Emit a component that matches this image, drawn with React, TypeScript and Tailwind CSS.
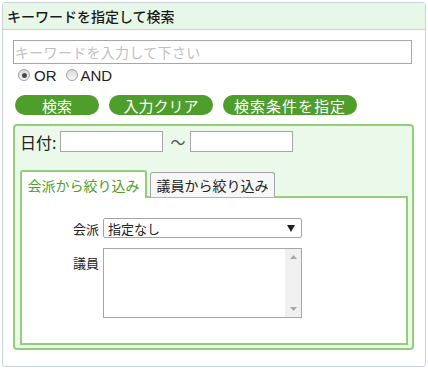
import React from "react";

const jp = { fontFamily: '"Noto Sans CJK JP", "Noto Sans", sans-serif' };

function Radio({ checked }: { checked: boolean }) {
  return (
    <span className="relative inline-block w-[12px] h-[12px] rounded-full border border-[#a0a0a0] bg-gradient-to-b from-[#d9d9d9] to-[#f8f8f8]">
      {checked && <span className="absolute left-[2.5px] top-[2.5px] w-[5px] h-[5px] rounded-full bg-[#4a4a4a]" />}
    </span>
  );
}

export default function App() {
  return (
    <div className="w-[428px] h-[370px] bg-white pt-[2px] pl-[2px]" style={jp}>
      <div className="w-[424px] h-[365px] border border-[#c8d2da] rounded-[3px] flex flex-col">
        <div className="h-[27px] bg-[#e8f8e8] border-b border-[#c8d2da] pl-[4px] flex items-center text-[14px] font-medium text-[#1a1a1a] leading-none">
          キーワードを指定して検索
        </div>
        <div className="pl-[10px] pt-[10px] flex flex-col">
          <div className="w-[399px] h-[24px] border border-[#a6a6a6] flex items-center pl-[1px] text-[14px] tracking-[0.3px] text-[#c0c0c0] leading-none">
            キーワードを入力して下さい
          </div>
          <div className="flex items-center h-[18px] mt-[2px] pl-[5px] text-[15px] text-[#222] leading-none" style={{ fontFamily: '"Liberation Sans", Arial, sans-serif' }}>
            <Radio checked />
            <span className="ml-[4px]">OR</span>
            <span className="ml-[9px]"><Radio checked={false} /></span>
            <span className="ml-[3px]">AND</span>
          </div>
          <div className="flex mt-[11px] pl-[2px] gap-[10px] text-white text-[15px] leading-none">
            <div className="w-[84px] h-[20px] rounded-full bg-[#4f9d2b] flex items-center justify-center">検索</div>
            <div className="w-[104px] h-[20px] rounded-full bg-[#4f9d2b] flex items-center justify-center">入力クリア</div>
            <div className="w-[134px] h-[20px] rounded-full bg-[#4f9d2b] flex items-center justify-center tracking-[1px]">検索条件を指定</div>
          </div>
          <div className="mt-[9px] w-[401px] h-[226px] border-2 border-[#93cf78] rounded-[4px] bg-[#ebf9eb] flex flex-col pl-[5px] pt-[5px]">
            <div className="flex items-center h-[21px] text-[16px] text-[#222] leading-none">
              <span>日付:</span>
              <div className="ml-[4px] w-[103px] h-[21px] bg-white border border-[#a6a6a6]" />
              <span className="ml-[7px] mr-[5px] text-[15px] text-[#555]">〜</span>
              <div className="w-[103px] h-[21px] bg-white border border-[#a6a6a6]" />
            </div>
            <div className="mt-[18px] flex items-end h-[28px] relative z-10 text-[14px] leading-none">
              <div className="w-[127px] h-[28px] border-2 border-b-0 border-[#93cf78] rounded-t-[3px] bg-white text-[#4f9d2b] flex items-center justify-center pb-[1px]">
                会派から絞り込み
              </div>
              <div className="ml-[3px] mb-[1px] w-[125px] h-[25px] border border-b-0 border-[#a6a6a6] rounded-t-[3px] bg-[#f7f7f7] text-[#222] flex items-center justify-center">
                議員から絞り込み
              </div>
            </div>
            <div className="-mt-[2px] w-[388px] h-[149px] border-2 border-[#93cf78] bg-white flex flex-col pt-[20px] text-[#222] leading-none">
              <div className="flex items-center h-[20px]">
                <span className="w-[81px] text-right pr-[4px] text-[13px]">会派</span>
                <div className="w-[199px] h-[20px] border border-[#a6a6a6] rounded-[2px] flex items-center justify-between pl-[4px] pr-[6px] text-[13px]">
                  <span>指定なし</span>
                  <svg width="8" height="7" viewBox="0 0 8 7"><path d="M0 0H8L4 7Z" fill="#222" /></svg>
                </div>
              </div>
              <div className="flex items-start mt-[10px]">
                <span className="w-[81px] text-right pr-[4px] text-[13px] pt-[8px]">議員</span>
                <div className="w-[199px] h-[70px] border border-[#a6a6a6] flex justify-end">
                  <div className="w-[16px] h-full bg-[#f0f0f0] flex flex-col items-center justify-between py-[6px]">
                    <svg width="7" height="4" viewBox="0 0 7 4"><path d="M0 4H7L3.5 0Z" fill="#a8a8a8" /></svg>
                    <svg width="7" height="4" viewBox="0 0 7 4"><path d="M0 0H7L3.5 4Z" fill="#a8a8a8" /></svg>
                  </div>
                </div>
              </div>
            </div>
          </div>
        </div>
      </div>
    </div>
  );
}
